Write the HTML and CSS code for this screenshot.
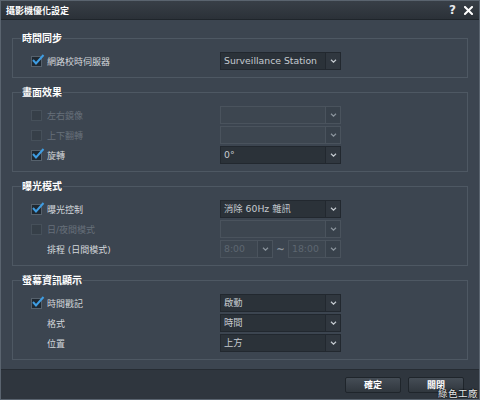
FILE: index.html
```html
<!DOCTYPE html>
<html>
<head>
<meta charset="utf-8">
<link rel="stylesheet" href="styles.css">
</head>
<body>
<div class="dialog">
  <div class="titlebar">
    <span class="title">攝影機優化設定</span>
    <span class="tools">
      <span class="help">?</span>
      <svg class="close" viewBox="0 0 9 9" width="9" height="9"><path d="M1 1 L8 8 M8 1 L1 8" stroke="#ffffff" stroke-width="2" stroke-linecap="square"/></svg>
    </span>
  </div>
  <div class="content">
    <fieldset class="group">
      <legend>時間同步</legend>
      <div class="row">
        <span class="cb"><svg viewBox="0 0 13 13"><polyline points="2,6 5,9.5 12.5,1" fill="none" stroke="#3f9de2" stroke-width="2"/></svg></span>
        <span class="label">網路校時伺服器</span>
        <div class="select"><span class="val">Surveillance Station</span><span class="arrow"><svg viewBox="0 0 7 4" width="7" height="4"><polyline points="1,0.8 3.5,3.2 6,0.8" fill="none" stroke="#c3c9cf" stroke-width="1.2"/></svg></span></div>
      </div>
    </fieldset>

    <fieldset class="group">
      <legend>畫面效果</legend>
      <div class="row">
        <span class="cb disabled"></span>
        <span class="label disabled">左右鏡像</span>
        <div class="select disabled"><span class="val"></span><span class="arrow"><svg viewBox="0 0 7 4" width="7" height="4"><polyline points="1,0.8 3.5,3.2 6,0.8" fill="none" stroke="#8a939c" stroke-width="1.2"/></svg></span></div>
      </div>
      <div class="row">
        <span class="cb disabled"></span>
        <span class="label disabled">上下翻轉</span>
        <div class="select disabled"><span class="val"></span><span class="arrow"><svg viewBox="0 0 7 4" width="7" height="4"><polyline points="1,0.8 3.5,3.2 6,0.8" fill="none" stroke="#8a939c" stroke-width="1.2"/></svg></span></div>
      </div>
      <div class="row">
        <span class="cb"><svg viewBox="0 0 13 13"><polyline points="2,6 5,9.5 12.5,1" fill="none" stroke="#3f9de2" stroke-width="2"/></svg></span>
        <span class="label">旋轉</span>
        <div class="select"><span class="val">0°</span><span class="arrow"><svg viewBox="0 0 7 4" width="7" height="4"><polyline points="1,0.8 3.5,3.2 6,0.8" fill="none" stroke="#c3c9cf" stroke-width="1.2"/></svg></span></div>
      </div>
    </fieldset>

    <fieldset class="group">
      <legend>曝光模式</legend>
      <div class="row">
        <span class="cb"><svg viewBox="0 0 13 13"><polyline points="2,6 5,9.5 12.5,1" fill="none" stroke="#3f9de2" stroke-width="2"/></svg></span>
        <span class="label">曝光控制</span>
        <div class="select"><span class="val">消除 60Hz 雜訊</span><span class="arrow"><svg viewBox="0 0 7 4" width="7" height="4"><polyline points="1,0.8 3.5,3.2 6,0.8" fill="none" stroke="#c3c9cf" stroke-width="1.2"/></svg></span></div>
      </div>
      <div class="row">
        <span class="cb disabled"></span>
        <span class="label disabled">日/夜間模式</span>
        <div class="select disabled"><span class="val"></span><span class="arrow"><svg viewBox="0 0 7 4" width="7" height="4"><polyline points="1,0.8 3.5,3.2 6,0.8" fill="none" stroke="#8a939c" stroke-width="1.2"/></svg></span></div>
      </div>
      <div class="row">
        <span></span>
        <span class="label">排程 (日間模式)</span>
        <div class="timepair">
          <div class="select disabled small"><span class="val">8:00</span><span class="arrow"><svg viewBox="0 0 7 4" width="7" height="4"><polyline points="1,0.8 3.5,3.2 6,0.8" fill="none" stroke="#8a939c" stroke-width="1.2"/></svg></span></div>
          <span class="tilde">~</span>
          <div class="select disabled small"><span class="val">18:00</span><span class="arrow"><svg viewBox="0 0 7 4" width="7" height="4"><polyline points="1,0.8 3.5,3.2 6,0.8" fill="none" stroke="#8a939c" stroke-width="1.2"/></svg></span></div>
        </div>
      </div>
    </fieldset>

    <fieldset class="group">
      <legend>螢幕資訊顯示</legend>
      <div class="row">
        <span class="cb"><svg viewBox="0 0 13 13"><polyline points="2,6 5,9.5 12.5,1" fill="none" stroke="#3f9de2" stroke-width="2"/></svg></span>
        <span class="label">時間戳記</span>
        <div class="select"><span class="val">啟動</span><span class="arrow"><svg viewBox="0 0 7 4" width="7" height="4"><polyline points="1,0.8 3.5,3.2 6,0.8" fill="none" stroke="#c3c9cf" stroke-width="1.2"/></svg></span></div>
      </div>
      <div class="row">
        <span></span>
        <span class="label">格式</span>
        <div class="select"><span class="val">時間</span><span class="arrow"><svg viewBox="0 0 7 4" width="7" height="4"><polyline points="1,0.8 3.5,3.2 6,0.8" fill="none" stroke="#c3c9cf" stroke-width="1.2"/></svg></span></div>
      </div>
      <div class="row">
        <span></span>
        <span class="label">位置</span>
        <div class="select"><span class="val">上方</span><span class="arrow"><svg viewBox="0 0 7 4" width="7" height="4"><polyline points="1,0.8 3.5,3.2 6,0.8" fill="none" stroke="#c3c9cf" stroke-width="1.2"/></svg></span></div>
      </div>
    </fieldset>
  </div>
  <div class="footer">
    <button class="btn">確定</button>
    <button class="btn">關閉</button>
  </div>
  <span class="watermark">綠色工廠</span>
</div>
</body>
</html>
```

FILE: styles.css
```css
* { box-sizing: border-box; }
html, body { margin: 0; padding: 0; }
body {
  width: 480px;
  height: 400px;
  background: #3c4550;
  font-family: "DejaVu Sans", "Noto Sans CJK TC", sans-serif;
}
.dialog {
  position: relative;
  width: 480px;
  height: 400px;
  border: 1px solid #5a646f;
  display: flex;
  flex-direction: column;
  background: #3c4550;
  overflow: hidden;
}
.titlebar {
  height: 19px;
  flex: none;
  display: flex;
  align-items: center;
  justify-content: space-between;
  padding: 0 6px 0 5px;
  background: linear-gradient(#383f47, #2b3138);
  border-bottom: 1px solid #1f252b;
}
.title {
  font-family: "Noto Sans CJK TC", sans-serif;
  font-size: 9px;
  font-weight: bold;
  color: #ffffff;
}
.tools {
  display: flex;
  align-items: center;
  gap: 8px;
}
.help {
  color: #e6e9ec;
  font-family: "DejaVu Sans", sans-serif;
  font-weight: bold;
  font-size: 12px;
  line-height: 12px;
}
.close { display: block; }
.content {
  flex: 1;
  padding: 11px 11px 0;
  display: flex;
  flex-direction: column;
  gap: 7px;
}
.group {
  margin: 0;
  min-width: 0;
  border: 1px solid #4e5863;
  padding: 6px 0 6px 0;
}
.group legend {
  margin-left: 8px;
  padding: 0 1px;
  font-family: "Noto Sans CJK TC", sans-serif;
  font-size: 10px;
  line-height: 14px;
  font-weight: bold;
  color: #ffffff;
}
.row {
  display: grid;
  grid-template-columns: 16px 173px 121px;
  align-items: center;
  height: 20px;
  margin-left: 18px;
}
.cb {
  position: relative;
  width: 11px;
  height: 11px;
  margin-top: 1px;
  border: 1px solid #56616c;
  background: #1f2831;
}
.cb.disabled {
  border-color: #46505a;
  background: #363f48;
}
.cb svg {
  position: absolute;
  left: -1px;
  top: -3px;
  width: 13px;
  height: 13px;
  overflow: visible;
}
.label {
  font-size: 9px;
  color: #d3d7db;
  white-space: nowrap;
}
.label.disabled { color: #67707a; }
.select {
  display: flex;
  height: 18px;
  border: 1px solid #22282f;
  background: #2b3239;
  color: #c5cad0;
  font-size: 9.3px;
}
.select .val {
  flex: 1;
  padding-left: 3px;
  line-height: 16px;
  white-space: nowrap;
  overflow: hidden;
}
.select .arrow {
  flex: none;
  width: 15px;
  border-left: 1px solid #22282f;
  background: #30373f;
  display: flex;
  align-items: center;
  justify-content: center;
}
.select .arrow svg { display: block; }
.select.disabled {
  border-color: #4a535d;
  background: #3d4650;
  color: #5d6670;
}
.select.disabled .arrow {
  border-left-color: #4a535d;
  background: #38414b;
}
.timepair {
  display: flex;
  align-items: center;
}
.select.small { width: 53px; }
.tilde {
  flex: 1;
  text-align: center;
  color: #8d959e;
  font-size: 10px;
  font-weight: bold;
}
.footer {
  height: 30px;
  flex: none;
  background: #2f363e;
  border-top: 1px solid #262c33;
  display: flex;
  justify-content: flex-end;
  align-items: flex-start;
  gap: 7px;
  padding: 7px 15px 0 0;
}
.btn {
  width: 56px;
  height: 16px;
  padding: 0;
  border: 1px solid #1f252b;
  border-radius: 2px;
  background: linear-gradient(#454d56, #30373e);
  color: #ffffff;
  font-family: "Noto Sans CJK TC", sans-serif;
  font-size: 9px;
  font-weight: bold;
  line-height: 14px;
}
.watermark {
  position: absolute;
  right: 1px;
  bottom: 0;
  font-family: "Noto Sans CJK TC", sans-serif;
  font-size: 9.5px;
  line-height: 11px;
  letter-spacing: 0.5px;
  color: #e8eaec;
  text-shadow: 0 0 2px #000000, 0 0 1px #000000;
}
```
